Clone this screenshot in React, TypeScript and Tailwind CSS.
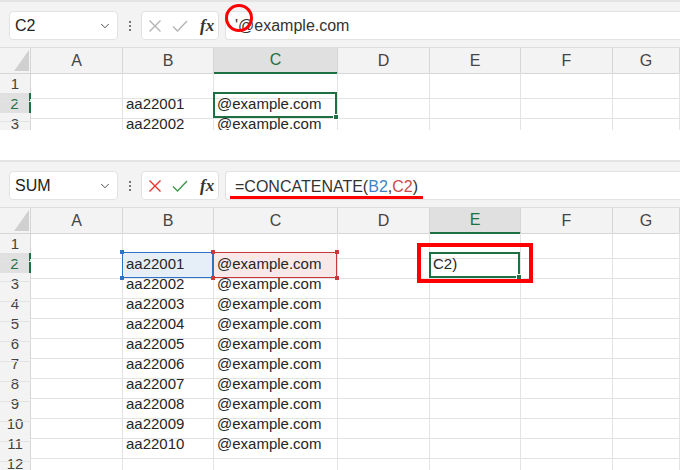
import type { ReactNode } from "react";
import { ChevronDown } from "lucide-react";

const COLS = ["A", "B", "C", "D", "E", "F", "G", ""];
const gridCols = "grid grid-cols-[31px_92px_91px_124px_92px_91px_92px_1fr]";
const font = { fontFamily: '"Liberation Sans", Arial, sans-serif' };

type Overlay = "active" | "blue" | "red";

interface PanelProps {
  name: string;
  editing: boolean;
  formula: ReactNode;
  selCol: number;
  rowCount: number;
  cells: Record<string, string>;
  overlays: Record<string, Overlay>;
  annotate?: Record<string, ReactNode>;
  height: number;
  extra?: ReactNode;
}

function XIcon({ color }: { color: string }) {
  return (
    <svg width="14" height="14" viewBox="0 0 14 14">
      <path d="M1.5 1.5 L12.5 12.5 M12.5 1.5 L1.5 12.5" stroke={color} strokeWidth="1.4" fill="none" />
    </svg>
  );
}

function CheckIcon({ color }: { color: string }) {
  return (
    <svg width="16" height="14" viewBox="0 0 16 14">
      <path d="M1 7.5 L5.5 12 L15 2" stroke={color} strokeWidth="1.4" fill="none" />
    </svg>
  );
}

function Toolbar({ name, editing, formula }: { name: string; editing: boolean; formula: ReactNode }) {
  return (
    <div className="flex h-[48px] items-start border-t-2 border-b border-t-[#e4e4e4] border-b-[#dedede] bg-[#f3f3f3] pl-[9px] pt-[9px]">
      <div className="flex h-[29px] w-[109px] items-center justify-between rounded-[4px] border border-[#e2e2e2] bg-white pl-[5px] pr-[5px] text-[16px] text-[#222]">
        <span>{name}</span>
        <ChevronDown size={14} strokeWidth={1.6} className="text-[#444]" />
      </div>
      <div className="flex h-[29px] w-[23px] flex-col items-center justify-center gap-[2px]">
        <span className="h-[2px] w-[2px] bg-[#777]" />
        <span className="h-[2px] w-[2px] bg-[#777]" />
        <span className="h-[2px] w-[2px] bg-[#777]" />
      </div>
      <div className="flex h-[29px] w-[78px] items-center rounded-[4px] border border-[#e2e2e2] bg-white pl-[6px]">
        <span className="flex w-[14px] justify-center">
          <XIcon color={editing ? "#e5332f" : "#b4b4b4"} />
        </span>
        <span className="ml-[10px] flex w-[16px] justify-center">
          <CheckIcon color={editing ? "#3d9a4b" : "#b4b4b4"} />
        </span>
        <span
          className="ml-[12px] text-[17px] font-bold italic leading-none text-[#333]"
          style={{ fontFamily: '"Liberation Serif", "Times New Roman", serif' }}
        >
          fx
        </span>
      </div>
      <div className="ml-[6px] flex h-[29px] flex-1 items-center rounded-l-[4px] border border-r-0 border-[#e2e2e2] bg-white pl-[9px] text-[16px] text-[#333]">
        {formula}
      </div>
    </div>
  );
}

function OverlayBox({ kind }: { kind: Overlay }) {
  if (kind === "active") {
    return (
      <div className="pointer-events-none absolute -left-px -top-px bottom-0 right-0 z-10 border-2 border-[#1e6f41]">
        <span className="absolute -bottom-[4px] -right-[4px] h-[6px] w-[6px] border border-white bg-[#1e6f41]" />
      </div>
    );
  }
  const c = kind === "blue" ? "border-[#2c74c6]" : "border-[#c8383c]";
  const dot = kind === "blue" ? "bg-[#2c74c6]" : "bg-[#c8383c]";
  return (
    <div className={`pointer-events-none absolute -left-px -top-px bottom-0 right-0 z-10 border-[1.5px] ${c}`}>
      <span className={`absolute -left-[3px] -top-[3px] h-[4px] w-[4px] ${dot}`} />
      <span className={`absolute -right-[3px] -top-[3px] h-[4px] w-[4px] ${dot}`} />
      <span className={`absolute -bottom-[3px] -left-[3px] h-[4px] w-[4px] ${dot}`} />
      <span className={`absolute -bottom-[3px] -right-[3px] h-[4px] w-[4px] ${dot}`} />
    </div>
  );
}

function Panel({ name, editing, formula, selCol, rowCount, cells, overlays, annotate, height, extra }: PanelProps) {
  return (
    <div className="relative shrink-0 overflow-hidden" style={{ height }}>
      <Toolbar name={name} editing={editing} formula={formula} />

      {/* column headers */}
      <div className={`${gridCols} h-[25px]`}>
        <div className="relative border-r border-b border-[#d6d6d6] bg-[#f3f3f3]">
          <svg className="absolute left-0 top-0" width="31" height="25">
            <polygon points="29,2 29,23 14,23" fill="#d0d0d0" />
          </svg>
        </div>
        {COLS.map((c, i) =>
          i === selCol ? (
            <div
              key={i}
              className="flex items-center justify-center border-r border-b-2 border-r-[#d6d6d6] border-b-[#1e6f41] bg-[#e0e0e0] text-[16px] text-[#1e6f41]"
            >
              {c}
            </div>
          ) : (
            <div
              key={i}
              className="flex items-center justify-center border-r border-b border-[#d6d6d6] bg-[#f3f3f3] text-[16px] text-[#444]"
            >
              {c}
            </div>
          )
        )}
      </div>

      {/* rows */}
      {Array.from({ length: rowCount }, (_, r) => {
        const row = r + 1;
        const sel = row === 2;
        return (
          <div key={row} className={`${gridCols} h-[20px]`}>
            <div
              className={
                sel
                  ? "flex items-center justify-center border-r-2 border-b border-r-[#1e6f41] border-b-[#d6d6d6] bg-[#e0e0e0] pb-[2px] text-[15px] text-[#1e6f41]"
                  : "flex items-center justify-center border-r border-b border-[#d6d6d6] bg-[#f3f3f3] pb-[2px] text-[15px] text-[#444]"
              }
            >
              {row}
            </div>
            {COLS.map((c, i) => {
              const key = `${c}${row}`;
              const ov = overlays[key];
              const bg = ov === "blue" ? "bg-[#e6eef8]" : ov === "red" ? "bg-[#f9e8e8]" : "";
              return (
                <div
                  key={i}
                  className={`relative whitespace-nowrap border-r border-b border-[#e3e3e3] pl-[3px] pt-[2px] text-[15px] leading-[18px] text-[#262626] ${bg}`}
                >
                  {cells[key]}
                  {ov && <OverlayBox kind={ov} />}
                  {annotate?.[key]}
                </div>
              );
            })}
          </div>
        );
      })}
      {extra}
    </div>
  );
}

const allCells: Record<string, string> = {};
for (let i = 0; i < 10; i++) {
  allCells[`B${i + 2}`] = `aa220${String(i + 1).padStart(2, "0")}`;
  allCells[`C${i + 2}`] = "@example.com";
}

export default function App() {
  return (
    <div className="flex h-[470px] w-[680px] flex-col overflow-hidden bg-white" style={font}>
      <Panel
        name="C2"
        editing={false}
        formula={<span>'@example.com</span>}
        selCol={2}
        rowCount={3}
        cells={{ B2: allCells.B2, C2: allCells.C2, B3: allCells.B3, C3: allCells.C3 }}
        overlays={{ C2: "active" }}
        height={130}
        extra={
          <div className="pointer-events-none absolute left-[225px] top-[4px] z-20 h-[28px] w-[28px] rounded-full border-[3px] border-[#ff0000]" />
        }
      />
      <div className="h-[30px] shrink-0" />
      <Panel
        name="SUM"
        editing={true}
        formula={
          <span className="-ml-[5px] mt-[4px] border-b-[3px] border-[#ff0000] px-[5px] leading-[19px]">
            =CONCATENATE(<span className="text-[#3b84c8]">B2</span>,<span className="text-[#cc4a4a]">C2</span>)
          </span>
        }
        selCol={4}
        rowCount={12}
        cells={{ ...allCells, E2: "C2)" }}
        overlays={{ B2: "blue", C2: "red", E2: "active" }}
        annotate={{
          E2: (
            <div className="pointer-events-none absolute -left-[13px] -top-[10px] z-20 h-[40px] w-[116px] border-4 border-[#ff0000]" />
          ),
        }}
        height={310}
      />
    </div>
  );
}
